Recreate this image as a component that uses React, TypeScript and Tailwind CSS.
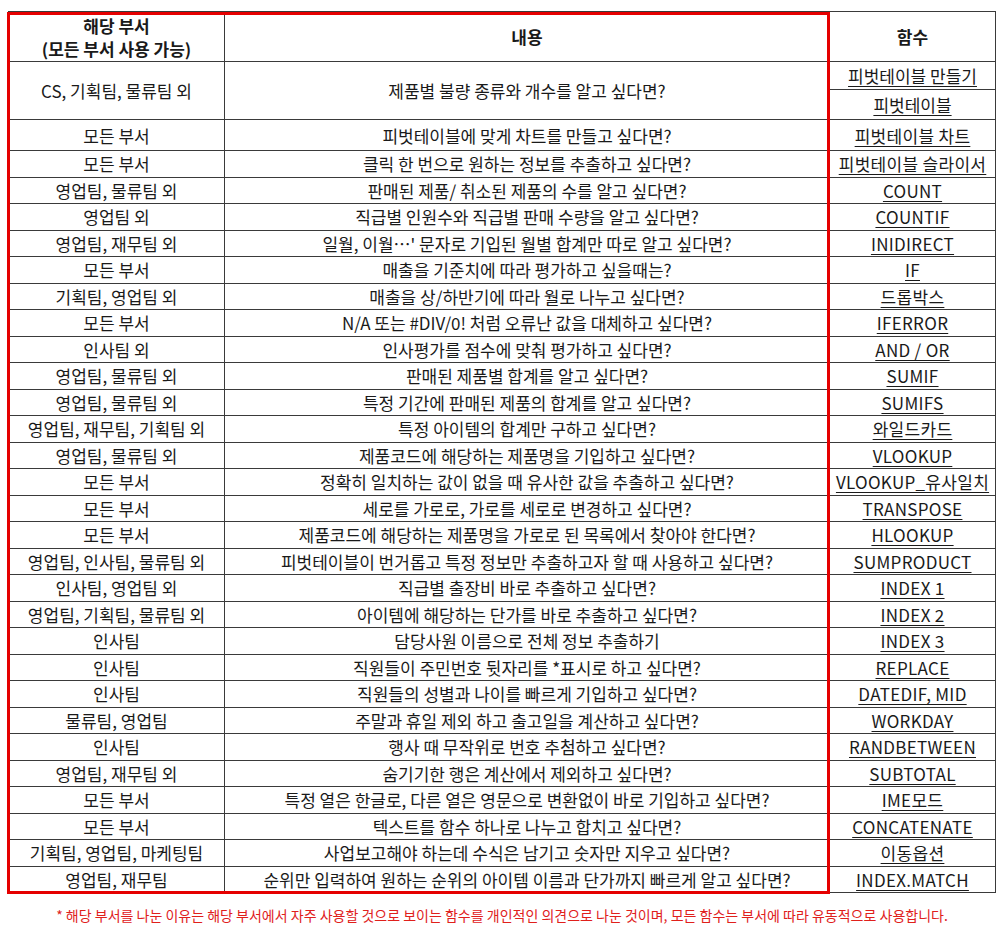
const rows: [string, string, string][] = [
  ['모든 부서', '피벗테이블에 맞게 차트를 만들고 싶다면?', '피벗테이블 차트'],
  ['모든 부서', '클릭 한 번으로 원하는 정보를 추출하고 싶다면?', '피벗테이블 슬라이서'],
  ['영업팀, 물류팀 외', '판매된 제품/ 취소된 제품의 수를 알고 싶다면?', 'COUNT'],
  ['영업팀 외', '직급별 인원수와 직급별 판매 수량을 알고 싶다면?', 'COUNTIF'],
  ['영업팀, 재무팀 외', '일월, 이월…\' 문자로 기입된 월별 합계만 따로 알고 싶다면?', 'INIDIRECT'],
  ['모든 부서', '매출을 기준치에 따라 평가하고 싶을때는?', 'IF'],
  ['기획팀, 영업팀 외', '매출을 상/하반기에 따라 월로 나누고 싶다면?', '드롭박스'],
  ['모든 부서', 'N/A 또는 #DIV/0! 처럼 오류난 값을 대체하고 싶다면?', 'IFERROR'],
  ['인사팀 외', '인사평가를 점수에 맞춰 평가하고 싶다면?', 'AND / OR'],
  ['영업팀, 물류팀 외', '판매된 제품별 합계를 알고 싶다면?', 'SUMIF'],
  ['영업팀, 물류팀 외', '특정 기간에 판매된 제품의 합계를 알고 싶다면?', 'SUMIFS'],
  ['영업팀, 재무팀, 기획팀 외', '특정 아이템의 합계만 구하고 싶다면?', '와일드카드'],
  ['영업팀, 물류팀 외', '제품코드에 해당하는 제품명을 기입하고 싶다면?', 'VLOOKUP'],
  ['모든 부서', '정확히 일치하는 값이 없을 때 유사한 값을 추출하고 싶다면?', 'VLOOKUP_유사일치'],
  ['모든 부서', '세로를 가로로, 가로를 세로로 변경하고 싶다면?', 'TRANSPOSE'],
  ['모든 부서', '제품코드에 해당하는 제품명을 가로로 된 목록에서 찾아야 한다면?', 'HLOOKUP'],
  ['영업팀, 인사팀, 물류팀 외', '피벗테이블이 번거롭고 특정 정보만 추출하고자 할 때 사용하고 싶다면?', 'SUMPRODUCT'],
  ['인사팀, 영업팀 외', '직급별 출장비 바로 추출하고 싶다면?', 'INDEX 1'],
  ['영업팀, 기획팀, 물류팀 외', '아이템에 해당하는 단가를 바로 추출하고 싶다면?', 'INDEX 2'],
  ['인사팀', '담당사원 이름으로 전체  정보 추출하기', 'INDEX 3'],
  ['인사팀', '직원들이 주민번호 뒷자리를 *표시로 하고 싶다면?', 'REPLACE'],
  ['인사팀', '직원들의 성별과 나이를 빠르게 기입하고 싶다면?', 'DATEDIF, MID'],
  ['물류팀, 영업팀', '주말과 휴일 제외 하고 출고일을 계산하고 싶다면?', 'WORKDAY'],
  ['인사팀', '행사 때 무작위로 번호 추첨하고 싶다면?', 'RANDBETWEEN'],
  ['영업팀, 재무팀 외', '숨기기한 행은 계산에서 제외하고 싶다면?', 'SUBTOTAL'],
  ['모든 부서', '특정 열은 한글로, 다른 열은 영문으로 변환없이 바로 기입하고 싶다면?', 'IME모드'],
  ['모든 부서', '텍스트를 함수 하나로 나누고 합치고 싶다면?', 'CONCATENATE'],
  ['기획팀, 영업팀, 마케팅팀', '사업보고해야 하는데 수식은 남기고 숫자만 지우고 싶다면?', '이동옵션'],
  ['영업팀, 재무팀', '순위만 입력하여 원하는 순위의 아이템 이름과 단가까지 빠르게 알고 싶다면?', 'INDEX.MATCH'],
];

const cell = 'flex items-center justify-center bg-white whitespace-nowrap';
const link = 'underline underline-offset-[3px] decoration-1';

export default function App() {
  return (
    <div
      className="w-[1000px] h-[926px] bg-white text-[#1a1a1a] pt-[11px] pl-[8px]"
      style={{ fontFamily: '"Noto Sans CJK KR", "Noto Sans", sans-serif' }}
    >
      <div className="relative w-[988px]">
        <div className="grid grid-cols-[215px_604px_165px] grid-rows-[49px_27px_29px_30px_repeat(28,25.5px)] gap-px bg-[#3a3a3a] p-px text-[17px] leading-none">
          <div className={`${cell} flex-col bg-[#dae3f3] font-bold leading-[23px]`}>
            <span>해당 부서</span>
            <span>(모든 부서 사용 가능)</span>
          </div>
          <div className={`${cell} bg-[#dae3f3] font-bold`}>내용</div>
          <div className={`${cell} bg-[#dae3f3] font-bold`}>함수</div>

          <div className={`${cell} row-span-2`}>CS, 기획팀, 물류팀 외</div>
          <div className={`${cell} row-span-2`}>제품별 불량 종류와 개수를 알고 싶다면?</div>
          <div className={cell}>
            <span className={link}>피벗테이블 만들기</span>
          </div>
          <div className={cell}>
            <span className={link}>피벗테이블</span>
          </div>

          {rows.map(([dept, desc, fn], i) => (
            <div key={i} className="contents">
              <div className={cell}>{dept}</div>
              <div className={cell}>{desc}</div>
              <div className={cell}>
                <span className={`${link} tracking-[0.3px]`}>{fn}</span>
              </div>
            </div>
          ))}
        </div>

        {/* red highlight frame over the first two columns */}
        <div className="absolute left-[-1px] top-px w-[823px] h-[882px] border-[3px] border-[#e50000] pointer-events-none" />
      </div>

      <p className="mt-[12px] w-[988px] text-center text-[14px] text-[#e0201b]">
        * 해당 부서를 나눈 이유는 해당 부서에서 자주 사용할 것으로 보이는 함수를 개인적인 의견으로 나눈 것이며, 모든 함수는 부서에 따라 유동적으로 사용합니다.
      </p>
    </div>
  );
}
